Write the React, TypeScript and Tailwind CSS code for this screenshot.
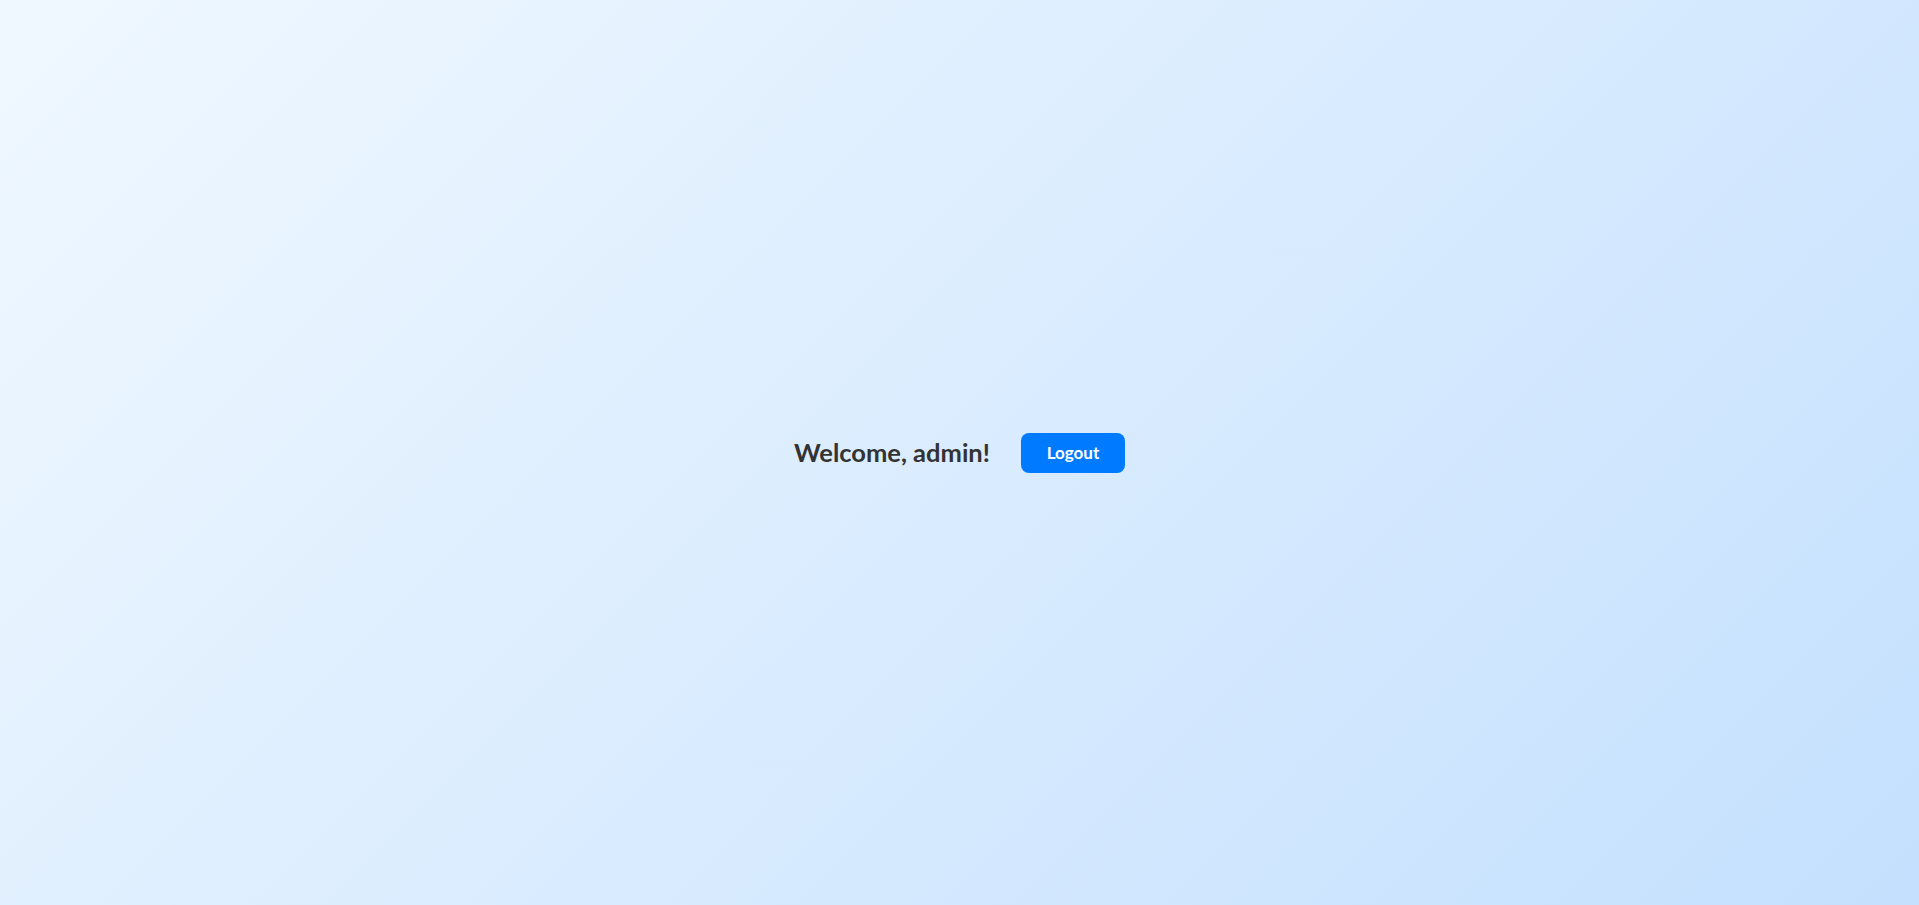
const App = () => {
  return (
    <div className="min-h-screen w-full flex items-center justify-center bg-[linear-gradient(135deg,#f0f8ff,#c4e0fe)] font-['Lato','Noto_Sans',sans-serif]">
      <div className="flex items-center gap-[31px]">
        <h2 className="text-[25.5px] font-bold text-[#333]">Welcome, admin!</h2>
        <button className="h-10 w-[104px] rounded-lg bg-[#007bff] text-[17px] font-bold text-white">
          Logout
        </button>
      </div>
    </div>
  );
};

export default App;
